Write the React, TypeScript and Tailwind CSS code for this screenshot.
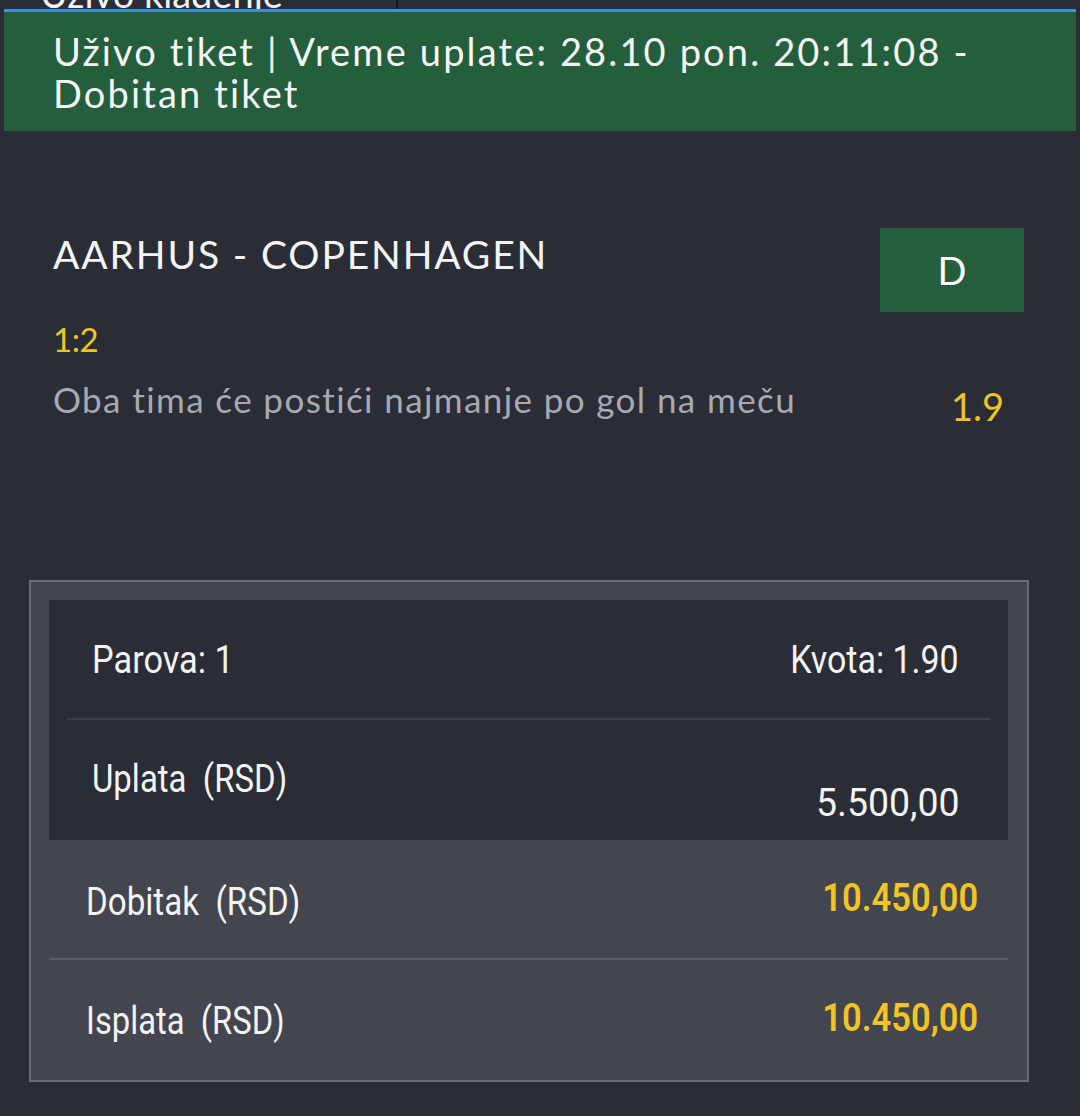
import React from "react";

export default function App() {
  return (
    <div className="w-[1080px] h-[1116px] bg-[#2a2d35] overflow-hidden font-['Lato',sans-serif]">
      {/* top strip */}
      <div className="h-[9px] flex overflow-hidden">
        <div className="w-[398px] h-[9px] border-r-2 border-[#17191d] overflow-hidden pl-[40px]">
          <div className="mt-[-28px] text-[38px] leading-[42px] text-[#f2f2f2] whitespace-nowrap">Uživo klađenje</div>
        </div>
      </div>
      <div className="mx-[4px] h-[3px] bg-[#3f8fd6]" />
      <div className="mx-[4px] h-[119px] bg-[#245e3d] pl-[49px] pt-[18px]">
        <div className="text-[38px] leading-[42px] tracking-[2.15px] text-[#f4f6f4]">
          Uživo tiket | Vreme uplate: 28.10 pon. 20:11:08 -
          <br />
          Dobitan tiket
        </div>
      </div>

      {/* match */}
      <div className="pl-[53px] pr-[56px] pt-[97px]">
        <div className="flex justify-between items-start">
          <div className="mt-[3px] text-[39px] leading-[46px] tracking-[1.85px] text-[#f4f4f4]">AARHUS - COPENHAGEN</div>
          <div className="w-[144px] h-[84px] bg-[#245e3d] flex items-center justify-center text-[38px] text-white">D</div>
        </div>
        <div className="mt-[7px] text-[33px] leading-[40px] tracking-[-0.5px] text-[#f0c32a]">1:2</div>
        <div className="mt-[20px] flex justify-between items-start">
          <div className="text-[35px] leading-[40px] tracking-[1.4px] text-[#a7aab0]">Oba tima će postići najmanje po gol na meču</div>
          <div className="mt-[5px] mr-[20px] text-[38px] leading-[44px] text-[#f0c32a]">1.9</div>
        </div>
      </div>

      {/* summary */}
      <div className="mt-[152px] ml-[29px] w-[1000px] border-2 border-[#6b6d73] bg-[#43464f] pt-[18px] pl-[18px] pr-[19px] text-[39px] leading-[44px] font-['Roboto',sans-serif]">
        <div className="bg-[#2a2d35]">
          <div className="h-[118px] flex justify-between items-start pl-[43px] pr-[49px] pt-[38px] text-[#f4f4f4]">
            <span className="inline-block whitespace-nowrap origin-left scale-x-[0.88]">Parova: 1</span>
            <span className="inline-block whitespace-nowrap origin-right scale-x-[0.87]">Kvota: 1.90</span>
          </div>
          <div className="mx-[18px] h-[2px] bg-[#3d4048]" />
          <div className="h-[120px] flex justify-between items-start pl-[43px] pr-[49px] text-[#f4f4f4]">
            <span className="mt-[37px] inline-block whitespace-nowrap origin-left scale-x-[0.845]">Uplata&nbsp; (RSD)</span>
            <span className="mt-[61px] inline-block whitespace-nowrap origin-right scale-x-[0.96]">5.500,00</span>
          </div>
        </div>
        <div className="h-[118px] flex justify-between items-start pl-[37px] pr-[30px]">
          <span className="mt-[40px] inline-block whitespace-nowrap origin-left scale-x-[0.85] text-[#f4f4f4]">Dobitak&nbsp; (RSD)</span>
          <span className="mt-[36px] inline-block whitespace-nowrap origin-right scale-x-[0.885] font-semibold text-[#f2c524]">10.450,00</span>
        </div>
        <div className="h-[2px] bg-[#5a5d65]" />
        <div className="h-[120px] flex justify-between items-start pl-[37px] pr-[30px]">
          <span className="mt-[39px] inline-block whitespace-nowrap origin-left scale-x-[0.84] text-[#f4f4f4]">Isplata&nbsp; (RSD)</span>
          <span className="mt-[36px] inline-block whitespace-nowrap origin-right scale-x-[0.885] font-semibold text-[#f2c524]">10.450,00</span>
        </div>
      </div>
    </div>
  );
}
